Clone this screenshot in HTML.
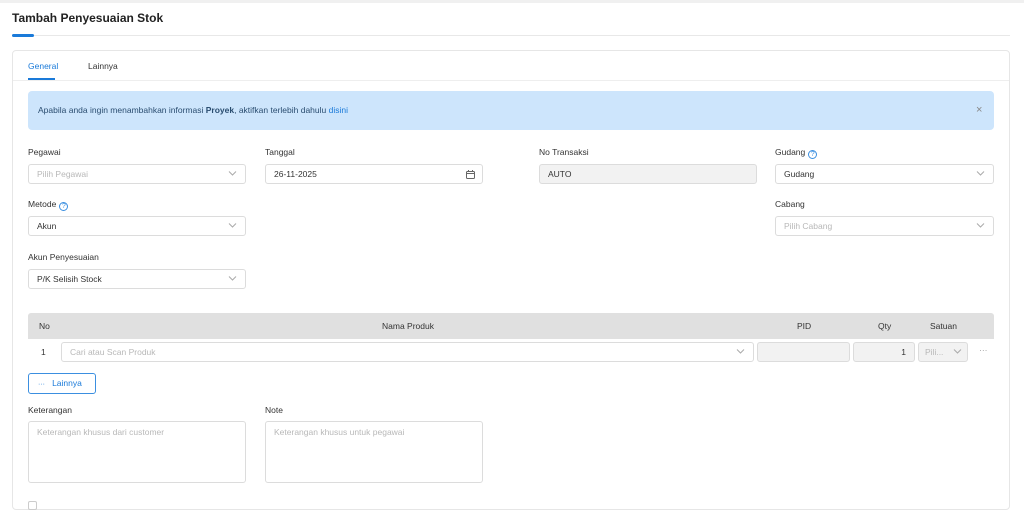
<!DOCTYPE html>
<html><head><style>
*{box-sizing:border-box;margin:0;padding:0}
body{width:1024px;height:504px;overflow:hidden;background:#fff;font-family:"Liberation Sans",sans-serif;font-size:8.5px;color:#333;position:relative}
.a{position:absolute}
.lbl{position:absolute;font-size:8.5px;color:#333}
.inp{position:absolute;height:20px;border:1px solid #dcdcdc;border-radius:3px;background:#fff;padding:0 8px;line-height:18px;font-size:8.5px;color:#333}
.ph{color:#b8b8b8}
.chev{position:absolute;right:8px;top:5px;width:9px;height:7px}
.q{display:inline-block;width:9px;height:9px;border:1px solid #3b8fe0;border-radius:50%;color:#3b8fe0;font-size:7px;line-height:7px;text-align:center;vertical-align:-1px;margin-left:3px}
</style></head><body>
<div class="a" style="left:0;top:0;width:1024px;height:3px;background:#f0f0f0"></div>
<div class="a" style="left:12px;top:11px;font-size:12px;font-weight:bold;color:#222">Tambah Penyesuaian Stok</div>
<div class="a" style="left:12px;top:35px;width:998px;height:1px;background:#e8e8e8"></div>
<div class="a" style="left:12px;top:34px;width:22px;height:3px;border-radius:2px;background:#1a7ad9"></div>
<div class="a" style="left:12px;top:50px;width:998px;height:460px;border:1px solid #e6e6e6;border-radius:4px"></div>
<div class="a" style="left:13px;top:80px;width:996px;height:1px;background:#eee"></div>
<div class="a" style="left:28px;top:61px;color:#1a7ad9">General</div>
<div class="a" style="left:28px;top:78px;width:27px;height:2px;background:#1a7ad9"></div>
<div class="a" style="left:88px;top:61px;color:#333">Lainnya</div>
<div class="a" style="left:28px;top:91px;width:966px;height:39px;background:#cde5fc;border-radius:4px"></div>
<div class="a" style="left:38px;top:105px;color:#2a4d70">Apabila anda ingin menambahkan informasi <b>Proyek</b>, aktifkan terlebih dahulu <span style="color:#1a7ad9">disini</span></div>
<div class="a" style="left:976px;top:104px;color:#888;font-size:11px">×</div>

<div class="lbl" style="left:28px;top:147px">Pegawai</div>
<div class="inp ph" style="left:28px;top:164px;width:218px">Pilih Pegawai<svg class="chev" viewBox="0 0 9 7"><path d="M1 1.5L4.5 5L8 1.5" fill="none" stroke="#aaa"/></svg></div>
<div class="lbl" style="left:265px;top:147px">Tanggal</div>
<div class="inp" style="left:265px;top:164px;width:218px">26-11-2025<svg class="a" style="right:7px;top:5px" width="9" height="9" viewBox="0 0 9 9"><rect x="0.5" y="1.5" width="8" height="7" rx="1" fill="none" stroke="#666"/><path d="M0.5 3.5h8M2.5 0v2M6.5 0v2" stroke="#666"/></svg></div>
<div class="lbl" style="left:539px;top:147px">No Transaksi</div>
<div class="inp" style="left:539px;top:164px;width:218px;background:#f2f2f2">AUTO</div>
<div class="lbl" style="left:775px;top:147px">Gudang<span class="q">?</span></div>
<div class="inp" style="left:775px;top:164px;width:219px">Gudang<svg class="chev" viewBox="0 0 9 7"><path d="M1 1.5L4.5 5L8 1.5" fill="none" stroke="#aaa"/></svg></div>

<div class="lbl" style="left:28px;top:199px">Metode<span class="q">?</span></div>
<div class="inp" style="left:28px;top:216px;width:218px">Akun<svg class="chev" viewBox="0 0 9 7"><path d="M1 1.5L4.5 5L8 1.5" fill="none" stroke="#aaa"/></svg></div>
<div class="lbl" style="left:775px;top:199px">Cabang</div>
<div class="inp ph" style="left:775px;top:216px;width:219px">Pilih Cabang<svg class="chev" viewBox="0 0 9 7"><path d="M1 1.5L4.5 5L8 1.5" fill="none" stroke="#aaa"/></svg></div>

<div class="lbl" style="left:28px;top:252px">Akun Penyesuaian</div>
<div class="inp" style="left:28px;top:269px;width:218px">P/K Selisih Stock<svg class="chev" viewBox="0 0 9 7"><path d="M1 1.5L4.5 5L8 1.5" fill="none" stroke="#aaa"/></svg></div>

<div class="a" style="left:28px;top:313px;width:966px;height:26px;background:#e0e0e0;border-radius:3px 3px 0 0"></div>
<div class="a" style="left:39px;top:321px">No</div>
<div class="a" style="left:382px;top:321px">Nama Produk</div>
<div class="a" style="left:797px;top:321px">PID</div>
<div class="a" style="left:878px;top:321px">Qty</div>
<div class="a" style="left:930px;top:321px">Satuan</div>
<div class="a" style="left:41px;top:347px">1</div>
<div class="inp ph" style="left:61px;top:342px;width:693px">Cari atau Scan Produk<svg class="chev" viewBox="0 0 9 7"><path d="M1 1.5L4.5 5L8 1.5" fill="none" stroke="#aaa"/></svg></div>
<div class="inp" style="left:757px;top:342px;width:93px;background:#f2f2f2"></div>
<div class="inp" style="left:853px;top:342px;width:62px;background:#f2f2f2;text-align:right">1</div>
<div class="inp ph" style="left:918px;top:342px;width:50px;background:#f2f2f2;padding:0 6px">Pili...<svg class="chev" style="right:5px" viewBox="0 0 9 7"><path d="M1 1.5L4.5 5L8 1.5" fill="none" stroke="#aaa"/></svg></div>
<div class="a" style="left:979px;top:345px;color:#999">···</div>

<div class="a" style="left:28px;top:373px;width:68px;height:21px;border:1px solid #3b8fe0;border-radius:3px;color:#1a7ad9;line-height:19px;padding-left:9px"><span style="font-size:7px">···</span>&nbsp;&nbsp; Lainnya</div>

<div class="lbl" style="left:28px;top:405px">Keterangan</div>
<div class="inp ph" style="left:28px;top:421px;width:218px;height:62px;line-height:1;padding-top:6px">Keterangan khusus dari customer</div>
<div class="lbl" style="left:265px;top:405px">Note</div>
<div class="inp ph" style="left:265px;top:421px;width:218px;height:62px;line-height:1;padding-top:6px">Keterangan khusus untuk pegawai</div>
<div class="a" style="left:28px;top:501px;width:9px;height:9px;border:1px solid #ccc;border-radius:2px"></div>
</body></html>
